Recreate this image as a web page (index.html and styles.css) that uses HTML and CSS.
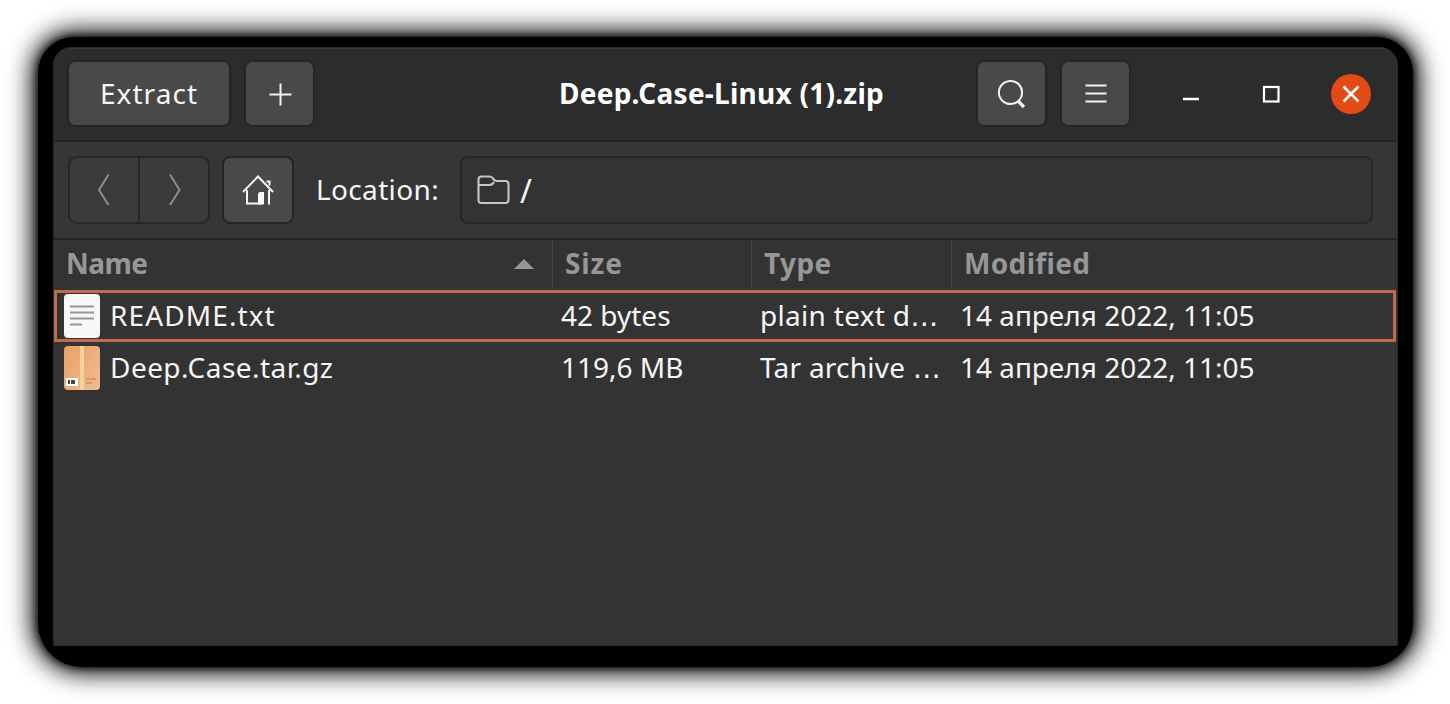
FILE: index.html
```html
<!DOCTYPE html>
<html lang="en">
<head>
<meta charset="utf-8">
<title>Deep.Case-Linux (1).zip</title>
<link rel="stylesheet" href="styles.css">
</head>
<body>
<div class="shadow">
<main class="window">
  <header class="titlebar">
    <button class="btn btn-extract"><span class="t t-extract">Extract</span></button>
    <button class="btn btn-icon btn-add"><svg width="24" height="24" viewBox="0 0 24 24"><path d="M12.500 1.500v22M1.500 12.500h22" stroke="#f4f4f4" stroke-width="2" fill="none"/></svg></button>
    <h1 class="title"><span class="t t-title">Deep.Case-Linux (1).zip</span></h1>
    <button class="btn btn-icon"><svg width="32" height="32" viewBox="0 0 32 32"><g fill="none" stroke="#f0f0f0"><circle cx="14.500" cy="14.500" r="11.600" stroke-width="2"/><path d="M22 23l6 6" stroke-width="3.200"/></g></svg></button>
    <button class="btn btn-icon btn-menu"><svg width="22" height="22" viewBox="0 0 22 22"><path d="M.5 2.500h21M.5 10.500h21M.5 18.500h21" stroke="#f4f4f4" stroke-width="2.200"/></svg></button>
    <div class="controls">
      <svg width="18" height="20" viewBox="0 0 18 20"><path d="M1 15h16" stroke="#fff" stroke-width="2.400"/></svg>
      <svg width="18" height="20" viewBox="0 0 18 20"><rect x="2" y="3" width="14.500" height="14.500" fill="none" stroke="#fff" stroke-width="2.200"/></svg>
      <svg width="40" height="40" viewBox="0 0 40 40"><circle cx="20" cy="20" r="20" fill="#e24a16"/><path d="M12.500 12.500l15 15M27.500 12.500l-15 15" stroke="#fff" stroke-width="2.600"/></svg>
    </div>
  </header>
  <nav class="toolbar">
    <div class="history">
      <button class="hist"><svg width="14" height="32" viewBox="0 0 14 32"><path d="M11.500 .5L2 16l9.500 15" fill="none" stroke="#929292" stroke-width="1.800"/></svg></button>
      <button class="hist"><svg width="14" height="32" viewBox="0 0 14 32"><path d="M3 .5L12.500 16 3 31" fill="none" stroke="#929292" stroke-width="1.800"/></svg></button>
    </div>
    <button class="btn btn-home"><svg width="34" height="32" viewBox="0 0 34 32"><g fill="none" stroke="#f6f6f6" stroke-width="2"><path d="M2 18L17 2.500 32 18"/><path d="M6 16v13.500h14M28 16v14.500M25.500 7.500h3v4"/></g><path d="M17 20.500q0-2.500 2.500-2.500h3.500v12.500h-6z" fill="#fff"/></svg></button>
    <span class="t t-location">Location:</span>
    <div class="entry">
      <svg width="34" height="30" viewBox="0 0 34 30"><path d="M1.500 10V4.500q0-3 3-3h8q2.500 0 3.500 2t3.500 2.500h9q3 0 3 3.500v15.500q0 3-3 3h-24q-3 0-3-3V10h11q3 0 4.500-3" fill="none" stroke="#c6c6c6" stroke-width="2.100"/></svg>
      <span class="t t-slash">/</span>
    </div>
  </nav>
  <section class="list">
    <div class="row head">
      <div class="cell"><span class="t t-name">Name</span><svg class="sort" width="20" height="10" viewBox="0 0 20 10"><path d="M0 10L10 0l10 10z" fill="#979797"/></svg></div>
      <div class="cell"><span class="t t-size">Size</span></div>
      <div class="cell"><span class="t t-type">Type</span></div>
      <div class="cell"><span class="t t-mod">Modified</span></div>
    </div>
    <div class="row item focused">
      <div class="cell"><svg width="36" height="44" viewBox="0 0 36 44"><rect width="36" height="44" rx="4" fill="#f7f7f7"/><path d="M6 12.500h24M6 18.500h24M6 24.500h24M6 30.500h12" stroke="#969696" stroke-width="1.800"/></svg><span class="t t-readme">README.txt</span></div>
      <div class="cell"><span class="t t-bytes">42 bytes</span></div>
      <div class="cell"><span class="t t-plain">plain text d<span class="dots">…</span></span></div>
      <div class="cell"><span class="t t-date">14 апреля 2022, 11:05</span></div>
    </div>
    <div class="row item">
      <div class="cell"><svg width="36" height="44" viewBox="0 0 36 44"><defs><linearGradient id="box" x1="0" y1="0" x2="1" y2="1"><stop offset="0" stop-color="#eb9f63"/><stop offset="1" stop-color="#efbd95"/></linearGradient></defs><rect width="36" height="44" rx="4" fill="url(#box)"/><path d="M16 0h4v44h-4z" fill="#f5d3a0"/><path d="M2 32h12v8H2z" fill="#fff"/><path d="M4 34h2v4H4zM7 34h4v4H7z" fill="#444"/><path d="M22 33h10M22 37h6" stroke="#e69458" stroke-width="2"/></svg><span class="t t-tar">Deep.Case.tar.gz</span></div>
      <div class="cell"><span class="t t-mb">119,6 MB</span></div>
      <div class="cell"><span class="t t-arch">Tar archive <span class="dots">…</span></span></div>
      <div class="cell"><span class="t t-date">14 апреля 2022, 11:05</span></div>
    </div>
  </section>
</main>
</div>
</body>
</html>
```
FILE: styles.css
```css
* { box-sizing: border-box; }
body { margin: 0; width: 1450px; height: 704px; overflow: hidden; background: #fff; font: 28px/36px "Noto Sans", sans-serif; color: #f6f6f6; }
.shadow { width: 1375px; height: 630px; margin: 37px 0 0 38px; padding: 10px 15px 20px; background: #000; border-radius: 36px 36px 44px 44px; box-shadow: 0 0 7px 1px rgba(0,0,0,.75), 0 0 24px 6px #000; }
.window { width: 1345px; height: 599px; border: 1px solid #292929; border-radius: 18px 18px 0 0; background: #333; overflow: hidden; display: flex; flex-direction: column; }
button { margin: 0; padding: 0; font: inherit; color: inherit; }
.t { white-space: nowrap; display: inline-block; padding-bottom: 3px; }
svg { display: block; flex: none; }
.titlebar { height: 94px; flex: none; display: flex; align-items: center; padding: 0 26px 2px 13px; background: #2c2c2c; border-bottom: 2px solid #242424; border-top: 1px solid #3a3a3a; }
.btn { height: 67px; flex: none; display: flex; align-items: center; justify-content: center; border: 2px solid #252525; border-radius: 8px; background: #494949; }
.btn-extract { width: 164px; }
.btn-icon { width: 71px; }
.btn-add { margin-left: 13px; }
.btn-menu { margin-left: 13px; }
.title { flex: 1; margin: 0; font-size: 28px; font-weight: 700; padding-left: 244px; color: #fff; }
.controls { display: flex; align-items: center; margin-left: 51px; }
.controls svg + svg { margin-left: 62px; }
.controls svg:last-child { margin-left: 51px; }
.toolbar { height: 98px; flex: none; display: flex; align-items: center; padding: 0 24px 0 14px; background: #363636; border-bottom: 2px solid #262626; }
.history { display: flex; width: 142px; height: 68px; border: 2px solid #272727; border-radius: 9px; background: #3b3b3b; }
.hist { flex: 1; border: 0; background: none; display: flex; align-items: center; justify-content: center; }
.hist + .hist { border-left: 2px solid #272727; }
.btn-home { width: 72px; height: 68px; margin-left: 12px; }
.entry { margin-left: 18px; flex: 1; height: 68px; display: flex; align-items: center; gap: 9px; padding-left: 15px; border: 2px solid #262626; border-radius: 8px; background: #333; }
.row { display: grid; grid-template-columns: 499px 199px 200px 1fr; }
.cell { display: flex; align-items: center; }
.head { height: 50px; color: #979797; font-weight: 700; }
.head .t { padding-bottom: 5px; }
.head .cell { padding-left: 12px; border-right: 1px solid #424242; }
.head .cell:last-child { border: 0; }
.sort { margin: 0 18px 2px auto; }
.item { height: 52px; border: 3px solid transparent; grid-template-columns: 497px 199px 200px 1fr; margin: 0 1px 0 0; }
.focused { border-color: #be6b4f; }
.item .cell { padding-left: 7px; gap: 10px; }
.dots { font-family: "DejaVu Sans", sans-serif; letter-spacing: 0; line-height: 1; }
.titlebar .t { padding-bottom: 1px; }
.t-extract { letter-spacing: 1.05px; }
.t-title { letter-spacing: .25px; }
.t-location { letter-spacing: .35px; margin-left: 22px; width: 126px; }
.t-slash { font-size: 32px; }
.toolbar .t-slash { padding: 1px 0 0; }
.t-name { letter-spacing: -.5px; }
.t-size { letter-spacing: .9px; }
.t-type { letter-spacing: .4px; }
.t-mod { letter-spacing: .35px; }
.t-readme { letter-spacing: 1.1px; }
.t-tar { letter-spacing: .45px; }
.t-plain { letter-spacing: .3px; }
.t-arch { letter-spacing: .25px; }
```
